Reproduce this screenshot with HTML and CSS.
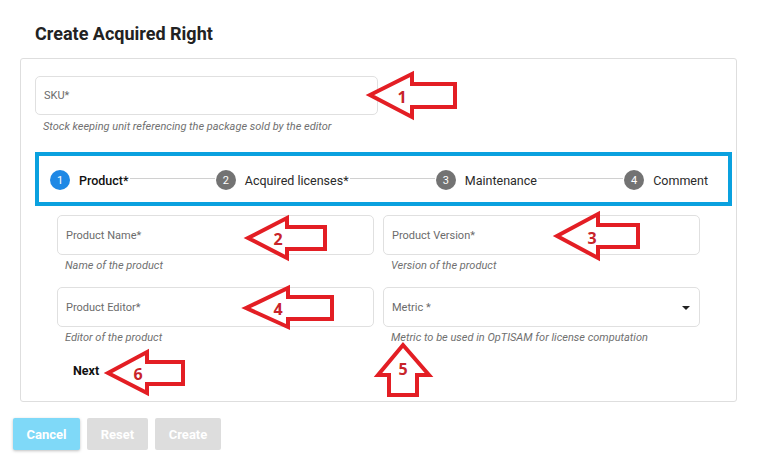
FILE: index.html
```html
<!DOCTYPE html>
<html>
<head>
<meta charset="utf-8">
<link rel="stylesheet" href="styles.css">
</head>
<body>
<div class="page">
  <h2 class="title">Create Acquired Right</h2>
  <div class="card">
    <div class="field sku">
      <div class="input">SKU*</div>
      <div class="hint">Stock keeping unit referencing the package sold by the editor</div>
    </div>
    <div class="stepper">
      <div class="step active"><span class="num">1</span><span class="label">Product*</span></div>
      <div class="line"></div>
      <div class="step"><span class="num">2</span><span class="label">Acquired licenses*</span></div>
      <div class="line"></div>
      <div class="step"><span class="num">3</span><span class="label">Maintenance</span></div>
      <div class="line"></div>
      <div class="step"><span class="num">4</span><span class="label">Comment</span></div>
    </div>
    <div class="grid">
      <div class="field">
        <div class="input">Product Name*</div>
        <div class="hint">Name of the product</div>
      </div>
      <div class="field">
        <div class="input">Product Version*</div>
        <div class="hint">Version of the product</div>
      </div>
      <div class="field">
        <div class="input">Product Editor*</div>
        <div class="hint">Editor of the product</div>
      </div>
      <div class="field">
        <div class="input select">Metric *<span class="caret"></span></div>
        <div class="hint">Metric to be used in OpTISAM for license computation</div>
      </div>
    </div>
    <div class="next">Next</div>
  </div>
  <div class="actions">
    <button class="btn cancel">Cancel</button>
    <button class="btn reset">Reset</button>
    <button class="btn create">Create</button>
  </div>
  <svg class="annotations" width="757" height="470" viewBox="0 0 757 470">
    <g class="arrow">
      <polygon points="370,95 412,74 412,84 455,84 455,107 412,107 412,117"/>
      <polygon points="248,238 287,218 287,227 325,227 325,249 287,249 287,258"/>
      <polygon points="557,236 598,214 598,225 638,225 638,247 598,247 598,258"/>
      <polygon points="246,308 288,288 288,297 332,297 332,319 288,319 288,327"/>
      <polygon points="403,345 429,375 417,375 417,395 389,395 389,375 378,375"/>
      <polygon points="108,373 147,352 147,362 183,362 183,384 147,384 147,393"/>
    </g>
    <g class="numbers">
      <text x="402" y="97">1</text>
      <text x="278" y="239">2</text>
      <text x="592" y="238">3</text>
      <text x="278" y="309">4</text>
      <text x="403" y="369">5</text>
      <text x="138" y="374">6</text>
    </g>
  </svg>
</div>
</body>
</html>
```
FILE: styles.css
```css
* { box-sizing: border-box; }
html, body { margin: 0; padding: 0; background: #fff; }
body { font-family: Roboto, "Noto Sans", Arial, sans-serif; color: #212121; }
.page { position: relative; width: 757px; height: 470px; overflow: hidden; }
.title {
  margin: 0;
  padding: 24px 0 0 35px;
  font-size: 18px;
  line-height: 20px;
  font-weight: 700;
  color: #222;
}
.card {
  margin: 14px 0 0 20px;
  width: 717px;
  height: 344px;
  border: 1px solid #dedede;
  border-radius: 3px;
  padding: 17px 0 0 14px;
}
.input {
  height: 40px;
  border: 1px solid #e0e0e0;
  border-radius: 5px;
  padding: 0 0 0 8px;
  display: flex;
  align-items: center;
  font-size: 11px;
  color: #6b6b6b;
  position: relative;
}
.sku .input { width: 343px; height: 39px; }
.hint {
  margin: 4px 0 0 8px;
  font-size: 11px;
  line-height: 14px;
  font-style: italic;
  color: #707070;
}
.sku .hint { margin-top: 5px; }
.stepper {
  margin-top: 18px;
  width: 697px;
  height: 54px;
  border: 4px solid #0aa1df;
  display: flex;
  align-items: center;
  padding: 2px 20px 0 11px;
}
.step { display: flex; align-items: center; }
.num {
  width: 20px;
  height: 20px;
  border-radius: 50%;
  background: #737373;
  color: #fff;
  font-size: 11px;
  display: flex;
  align-items: center;
  justify-content: center;
  margin-right: 9px;
}
.step.active .num { background: #1e88e5; }
.label { font-size: 12.5px; color: #2a2a2a; }
.step.active .label { font-weight: 500; color: #111; }
.line { flex: 1; height: 1px; background: #d0d0d0; margin: -4px 1px 0; }
.grid {
  margin: 9px 0 0 22px;
  display: grid;
  grid-template-columns: 317px 317px;
  column-gap: 9px;
  row-gap: 14px;
}
.caret {
  position: absolute;
  right: 9px;
  top: 18px;
  width: 0;
  height: 0;
  border-left: 4px solid transparent;
  border-right: 4px solid transparent;
  border-top: 4px solid #222;
}
.next {
  margin: 18px 0 0 38px;
  font-size: 12.5px;
  line-height: 16px;
  font-weight: 700;
  color: #111;
}
.actions {
  margin: 16px 0 0 13px;
  display: flex;
  gap: 7px;
}
.btn {
  height: 32px;
  border: none;
  border-radius: 2px;
  color: #fff;
  font-family: Roboto, Arial, sans-serif;
  font-size: 13px;
  font-weight: 700;
  padding: 0;
}
.cancel { width: 67px; background: #7fd9f8; box-shadow: 0 1px 3px rgba(0,0,0,0.25); }
.reset { width: 61px; background: #dddddd; }
.create { width: 66px; background: #dddddd; }
.annotations { position: absolute; left: 0; top: 0; pointer-events: none; }
.arrow polygon { fill: #fff; fill-opacity: 0.9; stroke: #e31e24; stroke-width: 4; stroke-linejoin: miter; }
.numbers text {
  font-family: "Open Sans", Roboto, sans-serif;
  font-weight: 700;
  font-size: 16px;
  fill: #c8242a;
  text-anchor: middle;
  dominant-baseline: central;
}
```
